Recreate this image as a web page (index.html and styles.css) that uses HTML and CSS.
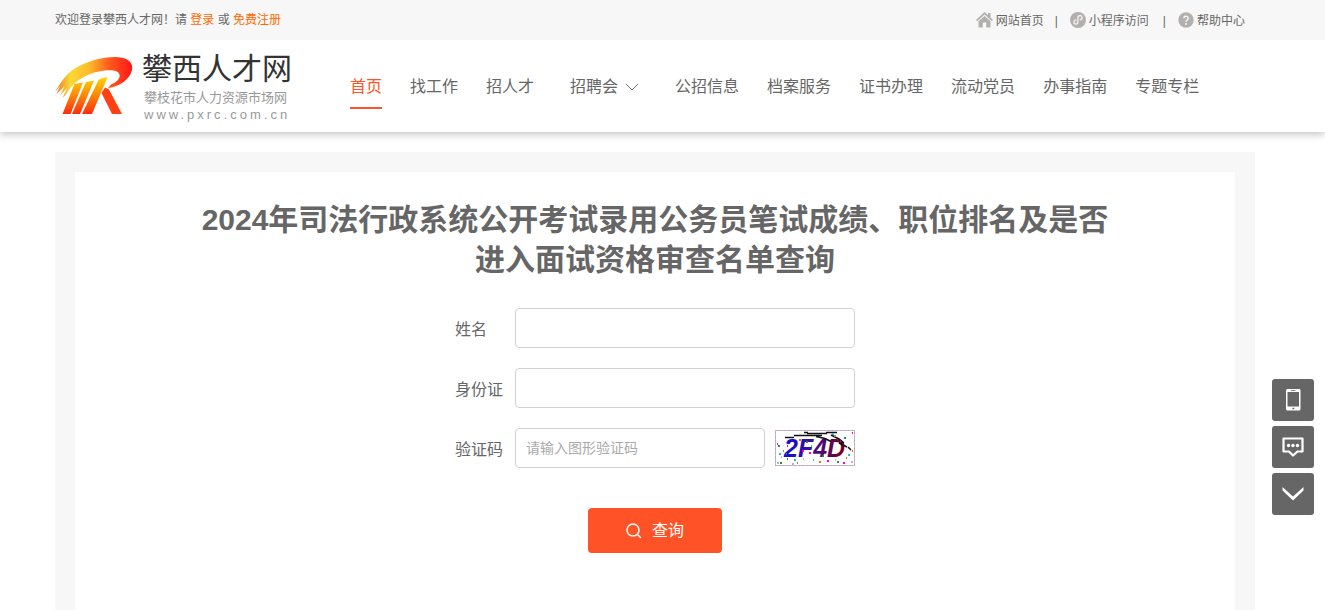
FILE: index.html
```html
<!DOCTYPE html>
<html lang="zh-CN">
<head>
<meta charset="utf-8">
<meta name="viewport" content="width=device-width, initial-scale=1">
<title>攀西人才网</title>
<link rel="stylesheet" href="styles.css">
</head>
<body>
<div class="topbar">
  <div class="wrap topbar-inner">
    <p class="welcome">欢迎登录攀西人才网！请 <a href="#">登录</a> 或 <a href="#">免费注册</a></p>
    <ul class="quick">
      <li><a href="#"><svg width="17" height="16" viewBox="0 0 17 16" fill="#b3afaf"><path d="M8.500 0 0 8l1.200 1.200L8.500 2.600l7.300 6.600L17 8l-2.500-2.400V1H12v2.300z"/><path d="m8.500 4-6 5.300v6.200h4.300v-5h3.400v5h4.300V9.300z"/></svg>网站首页</a></li>
      <li><a href="#"><svg width="16" height="16" viewBox="0 0 16 16"><circle cx="8" cy="8" r="8" fill="#b3afaf"/><path d="M6 8.200a2 2 0 1 0 1.900 2.200V5.800a2.100 2.100 0 1 1 2.300 2" fill="none" stroke="#f7f7f7" stroke-width="1.200" stroke-linecap="round"/></svg>小程序访问</a></li>
      <li><a href="#"><svg width="16" height="16" viewBox="0 0 16 16"><circle cx="8" cy="8" r="7.700" fill="#b3afaf"/><path d="M5.900 6.300a2.100 2.100 0 1 1 3.300 1.700C8.300 8.600 8 8.900 8 9.800" fill="none" stroke="#f7f7f7" stroke-width="1.500"/><circle cx="8" cy="11.900" r="1" fill="#f7f7f7"/></svg>帮助中心</a></li>
    </ul>
  </div>
</div>
<header class="header">
  <div class="wrap header-inner">
    <a class="logo" href="#">
      <svg width="80" height="60" viewBox="0 0 80 60" aria-hidden="true">
        <defs>
          <linearGradient id="swoosh" x1="0" y1="0" x2="1" y2="0"><stop offset="0" stop-color="#e8762c"/><stop offset=".2" stop-color="#fdd835"/><stop offset=".45" stop-color="#fcb92c"/><stop offset=".7" stop-color="#ff5a1c"/><stop offset="1" stop-color="#ff1717"/></linearGradient>
          <linearGradient id="bars" x1="0" y1="0" x2="0" y2="1"><stop offset="0" stop-color="#ffd500"/><stop offset=".5" stop-color="#fb8508"/><stop offset="1" stop-color="#ff2c10"/></linearGradient>
        </defs>
        <path fill="url(#swoosh)" d="M0 36C4 29 9 21 15 16 22 10 35 4 50 1.800 60 .4 68 .8 73 4 78 7.500 78.500 13 75 19 71 26 62 31 53 32L56 28.500C62 26 65.500 22 64.500 18.500 63 13.500 54 13.500 44 15.500 34 17.500 25 22 18 29 15 32 13 35 11 38.500L7.500 42 12 32 5 39.500 9.500 30.500 1.500 38 5 30z"/>
        <path fill="url(#bars)" d="M19.500 28 28 26.500 15.500 58H7.500zM31 26 39 24.500 25 58H17zM43.500 24C47 22 51 21 52.500 21.500L37 58H27z"/>
        <path fill="#ff4012" d="M46.500 37 50 31.500 54 33.500 67 58H57z"/>
      </svg>
      <span class="brand"><strong>攀西人才网</strong><span class="brand-sub">攀枝花市人力资源市场网</span><span class="brand-url">www.pxrc.com.cn</span></span>
    </a>
    <nav class="nav">
      <a class="active" href="#">首页</a>
      <a href="#">找工作</a>
      <a href="#">招人才</a>
      <a class="has-menu" href="#">招聘会<svg width="14" height="8" viewBox="0 0 14 8" fill="none" stroke="#777"><path d="m.8.8 6.200 6.200L13.200.8"/></svg></a>
      <a href="#">公招信息</a>
      <a href="#">档案服务</a>
      <a href="#">证书办理</a>
      <a href="#">流动党员</a>
      <a href="#">办事指南</a>
      <a href="#">专题专栏</a>
    </nav>
  </div>
</header>
<main class="main">
  <div class="wrap frame">
    <section class="panel">
      <h1>2024年司法行政系统公开考试录用公务员笔试成绩、职位排名及是否进入面试资格审查名单查询</h1>
      <form class="query">
        <div class="row"><label for="name">姓名</label><input id="name" type="text"></div>
        <div class="row"><label for="idcard">身份证</label><input id="idcard" type="text"></div>
        <div class="row"><label for="code">验证码</label><input id="code" type="text" placeholder="请输入图形验证码">
          <svg class="captcha" width="80" height="36" viewBox="0 0 80 36">
            <defs><linearGradient id="ink" x1="0" y1="0" x2="1" y2="0"><stop offset="0" stop-color="#0c0cdf"/><stop offset=".5" stop-color="#420b94"/><stop offset="1" stop-color="#780018"/></linearGradient></defs>
            <rect x=".5" y=".5" width="79" height="35" fill="#fff" stroke="#d9b9d9"/><rect x=".5" y=".5" width="79" height="35" fill="none" stroke="#aaa" stroke-dasharray="2 2"/>
            <text class="captcha-text" x="9" y="27" fill="url(#ink)">2F4D</text>
            <path d="M10 7.500h9M19 5.500h28M29 2.500h4M32 3.500h20M51 2.500h11M41 6.500l9 2 6 3M56 5l8 4 5 4M64 13l8 4M73 17l3 3" fill="none" stroke="#111" stroke-width="1.500"/>
            <path d="M2 14h1M27 21h2M12 16h1M77 3h1M68 33h2M52 31h2M34 23h2" stroke="#f0c" stroke-width="2"/>
            <path d="M3 16h2M12 29h1M31 12h2M47 26h2M69 8h2M62 32h2M5 33h2M11 24h1" stroke="#268f38" stroke-width="2"/>
            <path d="M19 30h2M38 30h1M57 4h2M73 25h2M4 24h2M36 16h1" stroke="#21b9dc" stroke-width="2"/>
            <path d="M8 21h1M24 10h2M44 32h2M71 28h1M59 6h2M22 33h1M77 21h1" stroke="#d47622" stroke-width="2"/>
            <path d="M2 33h2M17 34h2M28 29h1M60 30h1M76 32h2M65 11h1M6 27h1" stroke="#805bbb" stroke-width="1"/>
          </svg>
        </div>
        <button class="submit" type="submit"><svg width="16" height="16" viewBox="0 0 16 16" fill="none" stroke="#fff" stroke-width="1.500" stroke-linecap="round"><circle cx="7" cy="7" r="6"/><path d="m11.500 11.500 3 3"/></svg>查询</button>
      </form>
    </section>
  </div>
</main>
<aside class="tools">
  <button type="button" aria-label="手机版"><svg width="16" height="22" viewBox="0 0 16 22"><path fill="#fff" fill-rule="evenodd" d="M2.500 0h11A1.500 1.500 0 0 1 15.500 1.500v18.500a1.500 1.500 0 0 1-1.500 1.500h-11.500A1.500 1.500 0 0 1 1 20v-18.500A1.500 1.500 0 0 1 2.500 0zM2.500 3v14.500h11.500V3zM6 1.200v.8h4.500v-.8zM7.500 18.800v1.500h1.800v-1.500z"/></svg></button>
  <button type="button" aria-label="留言"><svg width="22" height="20" viewBox="0 0 22 20" fill="none" stroke="#fff" stroke-width="2.200"><path d="M1.500 1.500h19v13h-5L11 18.500l-4-4H1.500z" stroke-linejoin="round"/><g fill="#fff" stroke="none"><circle cx="6.500" cy="8.500" r="1.700"/><circle cx="11" cy="8.500" r="1.700"/><circle cx="15.500" cy="8.500" r="1.700"/></g></svg></button>
  <button type="button" aria-label="向下"><svg width="22" height="14" viewBox="0 0 22 14"><path fill="#fff" d="M.5 0 11 9.500 21.500 0V3.500L11 13.500.5 3.500z"/></svg></button>
</aside>
</body>
</html>
```

FILE: styles.css
```css
* { box-sizing: border-box; }
body {
  display: flex;
  flex-direction: column;
  min-height: 100vh;
  margin: 0;
  color: #666;
  background: #fff;
  font: 16px/24px "Liberation Sans", "Noto Sans CJK SC", sans-serif;
}
a { color: inherit; text-decoration: none; }
svg { flex: none; }
.topbar, .header, .main { padding-right: 15px; }
.wrap { width: 100%; max-width: 1200px; margin: 0 auto; }
.topbar { position: relative; z-index: 1; background: #f7f7f7; font-size: 12px; }
.topbar-inner { display: flex; justify-content: space-between; height: 40px; }
.welcome { margin: 0; line-height: 40px; }
.welcome a { color: #ff6a00; }
.quick { display: flex; margin: 0; padding: 2px 10px 0 0; list-style: none; }
.quick li { display: flex; align-items: center; }
.quick li + li::before { content: "|"; padding: 0 12px 0 11px; }
.quick li:last-child::before { padding-left: 14px; }
.quick a { display: flex; align-items: center; gap: 3px; line-height: 38px; }
.quick svg { margin-bottom: 2px; }
.header { position: relative; box-shadow: 0 2px 8px rgba(0, 0, 0, .25); }
.header-inner { display: flex; align-items: center; height: 92px; }
.logo { display: flex; align-items: center; gap: 7px; width: 281px; }
.brand { display: flex; flex-direction: column; }
.brand strong { color: #333; font-size: 30px; font-weight: 400; line-height: 36px; }
.brand-sub { color: #999; font-size: 13px; line-height: 22px; padding-left: 2px; }
.brand-url { color: #999; font-size: 13px; line-height: 12px; letter-spacing: 3px; padding-left: 2px; }
.nav { display: flex; white-space: nowrap; }
.nav a { margin: 0 14px; padding: 12px 0 8px; border-bottom: 2px solid transparent; }
.nav .active { color: #ff5226; border-color: #ff5226; }
.nav .has-menu { display: flex; align-items: center; gap: 7px; padding-left: 8px; padding-right: 8px; }
.main { display: flex; flex: 1; padding-top: 20px; }
.frame { display: flex; padding: 20px 20px 0; background: #f7f7f7; }
.panel { flex: 1; padding: 28px 120px 40px; background: #fff; }
h1 { margin: 0 0 28px; font-size: 30px; line-height: 40px; text-align: center; }
.query { display: flex; flex-direction: column; gap: 20px; max-width: 400px; margin: 0 auto; }
.row { display: flex; align-items: center; height: 40px; }
.row label { width: 60px; padding-top: 3px; }
.row input {
  flex: 1;
  min-width: 0;
  height: 40px;
  padding: 0 10px;
  border: 1px solid #d2d2d2;
  border-radius: 4px;
  color: #666;
  font: inherit;
  font-size: 14px;
}
.row input::placeholder { color: #aaa; }
.captcha { margin-left: 10px; }
.captcha-text { font: italic bold 25px "Liberation Sans", sans-serif; }
.submit {
  display: flex;
  align-items: center;
  align-self: center;
  justify-content: center;
  gap: 10px;
  width: 134px;
  height: 45px;
  margin-top: 20px;
  border: 0;
  border-radius: 4px;
  color: #fff;
  background: #ff5226;
  font: inherit;
}
.tools { position: fixed; top: 379px; right: 11px; display: grid; gap: 5px; }
.tools button {
  display: grid;
  place-items: center;
  width: 42px;
  height: 42px;
  padding: 0;
  border: 0;
  border-radius: 3px;
  background: #666;
}
```
